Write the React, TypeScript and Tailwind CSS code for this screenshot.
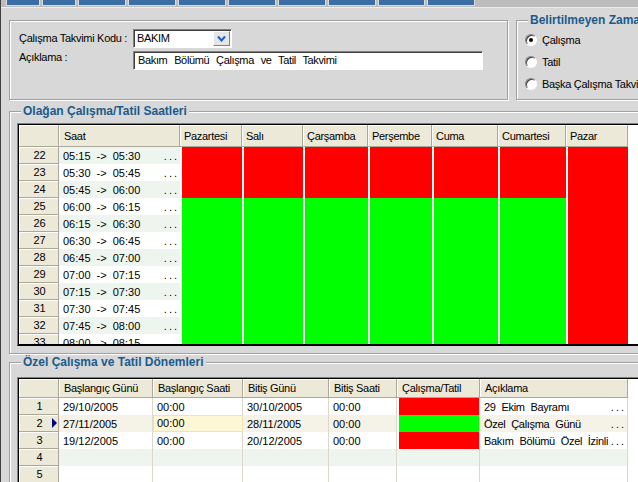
import React from 'react';

const days = [
  { name: 'Pazartesi', w: 'w-[62px]' },
  { name: 'Salı', w: 'w-[61px]' },
  { name: 'Çarşamba', w: 'w-[65px]' },
  { name: 'Perşembe', w: 'w-[64px]' },
  { name: 'Cuma', w: 'w-[66px]' },
  { name: 'Cumartesi', w: 'w-[68px]' },
  { name: 'Pazar', w: 'w-[62px]' },
];

const hourRows = Array.from({ length: 12 }, (_, i) => 22 + i);

const periods = [
  { n: 1, start: '29/10/2005', st: '00:00', end: '30/10/2005', et: '00:00', work: false, desc: '29 Ekim Bayramı' },
  { n: 2, start: '27/11/2005', st: '00:00', end: '28/11/2005', et: '00:00', work: true, desc: 'Özel Çalışma Günü', current: true },
  { n: 3, start: '19/12/2005', st: '00:00', end: '20/12/2005', et: '00:00', work: false, desc: 'Bakım Bölümü Özel İzinli' },
  { n: 4 },
  { n: 5 },
] as Array<{ n: number; start?: string; st?: string; end?: string; et?: string; work?: boolean; desc?: string; current?: boolean }>;

const toolbarButtons = ['w-[34px]', 'w-[34px]', 'w-[48px]', 'w-[48px]', 'w-[48px]', 'w-[48px]', 'w-[48px]', 'w-[48px]', 'w-[47px]', 'w-[48px]'];

function fmt(m: number) {
  const h = Math.floor(m / 60);
  const mm = m % 60;
  return `${String(h).padStart(2, '0')}:${String(mm).padStart(2, '0')}`;
}

function GroupBox({ title, className, children }: { title?: string; className: string; children?: React.ReactNode }) {
  return (
    <div className={`relative shrink-0 border border-[#a0a0a0] shadow-[inset_1px_1px_0_#fff,1px_1px_0_#fff] ${className}`}>
      {title && (
        <span className="absolute left-[11px] -top-[8px] px-[2px] bg-[#d8d8d8] text-[12px] leading-[14px] font-bold text-[#1a5b8c] whitespace-nowrap">
          {title}
        </span>
      )}
      {children}
    </div>
  );
}

function Radio({ checked, label }: { checked?: boolean; label: string }) {
  return (
    <div className="flex items-center h-[12px] gap-[5px]">
      <span className="w-[12px] h-[12px] shrink-0 rounded-full bg-white border border-[#808080] border-r-white border-b-white shadow-[inset_1px_1px_0_#404040] flex items-center justify-center">
        {checked && <span className="w-[4px] h-[4px] rounded-full bg-black" />}
      </span>
      <span className="tracking-[-0.3px] whitespace-nowrap">{label}</span>
    </div>
  );
}

export default function App() {
  return (
    <div className="w-[638px] h-[482px] overflow-hidden bg-[#d8d8d8] border-l border-[#404040] font-['Liberation_Sans',Arial,sans-serif] text-[11px] text-black">
      {/* toolbar strip */}
      <div className="h-[8px] bg-[#bdbdbd] border-b border-[#ececec] flex items-start gap-[2px] pl-[5px]">
        {toolbarButtons.map((w, i) => (
          <div key={i} className={`${w} h-[6px] bg-[#3a6ea5] border border-t-0 border-[#dcdcdc]`} />
        ))}
      </div>

      {/* top row */}
      <div className="flex items-start">
        <GroupBox className="ml-[8px] mt-[12px] w-[499px] h-[80px] pl-[9px] pt-[8px] flex flex-col gap-[3px]">
          <div className="flex items-center h-[19px]">
            <span className="w-[114px] tracking-[-0.3px]">Çalışma Takvimi Kodu :</span>
            <div className="w-[99px] h-[19px] bg-white border border-[#808080] border-r-white border-b-white shadow-[inset_1px_1px_0_#404040] flex items-center justify-between pl-[3px] pr-[1px]">
              <span className="tracking-[-0.3px]">BAKIM</span>
              <span className="w-[17px] h-[15px] bg-[#e6e6e6] border border-white border-r-[#808080] border-b-[#808080] flex items-center justify-center">
                <svg width="9" height="7" viewBox="0 0 9 7">
                  <polyline points="1,1.5 4.5,5.5 8,1.5" fill="none" stroke="#1c5fc8" strokeWidth="2" />
                </svg>
              </span>
            </div>
          </div>
          <div className="flex h-[19px]">
            <span className="w-[114px] leading-[13px] tracking-[-0.3px]">Açıklama :</span>
            <div className="w-[350px] h-[19px] bg-white border border-[#808080] border-r-white border-b-white shadow-[inset_1px_1px_0_#404040] flex items-center pl-[4px]">
              <span className="tracking-[-0.35px] [word-spacing:4px] whitespace-nowrap">Bakım Bölümü Çalışma ve Tatil Takvimi</span>
            </div>
          </div>
        </GroupBox>

        <GroupBox title="Belirtilmeyen Zamanlar" className="ml-[8px] mt-[12px] w-[140px] h-[80px] pl-[8px] pt-[13px] flex flex-col gap-[10px]">
          <Radio checked label="Çalışma" />
          <Radio label="Tatil" />
          <Radio label="Başka Çalışma Takvimi" />
        </GroupBox>
      </div>

      {/* regular hours */}
      <GroupBox title="Olağan Çalışma/Tatil Saatleri" className="ml-[8px] mt-[11px] w-[640px] h-[243px]">
        <div className="ml-[7px] mt-[11px] w-[640px] border-l border-t border-b border-[#808080] border-b-black">
          <div className="h-[221px] border-l border-t border-b border-black overflow-hidden">
            <div className="flex h-[22px]">
              <div className="w-[40px] shrink-0 bg-[#ece9d8] border-r border-b border-[#aca899] shadow-[inset_1px_1px_0_#fff]" />
              <div className="w-[121px] shrink-0 bg-[#ece9d8] border-r border-b border-[#aca899] shadow-[inset_1px_1px_0_#fff] pl-[5px] pt-[2px] flex items-center tracking-[-0.3px]">Saat</div>
              {days.map((d) => (
                <div key={d.name} className={`${d.w} shrink-0 bg-[#ece9d8] border-r border-b border-[#aca899] shadow-[inset_1px_1px_0_#fff] pl-[4px] pt-[2px] flex items-center tracking-[-0.3px] whitespace-nowrap`}>
                  {d.name}
                </div>
              ))}
              <div className="flex-1 bg-white" />
            </div>
            {hourRows.map((n) => {
              const start = (n - 1) * 15;
              const even = n % 2 === 0;
              return (
                <div key={n} className="flex h-[17px]">
                  <div className="w-[40px] shrink-0 bg-[#ece9d8] border-r border-b border-[#aca899] shadow-[inset_1px_1px_0_#fff] flex items-center justify-center pl-[2px] pt-[1px]">{n}</div>
                  <div className={`w-[121px] shrink-0 flex items-center justify-between pl-[4px] pr-[1px] pt-[1px] ${even ? 'bg-[#eef5ee]' : 'bg-white'}`}>
                    <span className="[word-spacing:3px] whitespace-nowrap">{fmt(start)} -&gt; {fmt(start + 15)}</span>
                    <span className="tracking-[2px]">...</span>
                  </div>
                  {days.map((d, i) => {
                    const red = i === 6 || n <= 24;
                    return <div key={d.name} className={`${d.w} shrink-0 border-l-2 border-white ${red ? 'bg-[#ff0000]' : 'bg-[#00ff00]'}`} />;
                  })}
                  <div className="flex-1 bg-white" />
                </div>
              );
            })}
          </div>
        </div>
      </GroupBox>

      {/* special periods */}
      <GroupBox title="Özel Çalışma ve Tatil Dönemleri" className="ml-[8px] mt-[8px] w-[640px] h-[140px]">
        <div className="ml-[7px] mt-[14px] w-[640px] border-l border-t border-[#808080]">
          <div className="h-[110px] border-l border-t border-black overflow-hidden">
            <div className="flex h-[19px]">
              <div className="w-[40px] shrink-0 bg-[#ece9d8] border-r border-b border-[#aca899] shadow-[inset_1px_1px_0_#fff]" />
              <div className="w-[94px] shrink-0 bg-[#ece9d8] border-r border-b border-[#aca899] shadow-[inset_1px_1px_0_#fff] pl-[5px] pt-[1px] flex items-center tracking-[-0.3px] whitespace-nowrap">Başlangıç Günü</div>
              <div className="w-[90px] shrink-0 bg-[#ece9d8] border-r border-b border-[#aca899] shadow-[inset_1px_1px_0_#fff] pl-[5px] pt-[1px] flex items-center tracking-[-0.3px] whitespace-nowrap">Başlangıç Saati</div>
              <div className="w-[86px] shrink-0 bg-[#ece9d8] border-r border-b border-[#aca899] shadow-[inset_1px_1px_0_#fff] pl-[5px] pt-[1px] flex items-center tracking-[-0.3px] whitespace-nowrap">Bitiş Günü</div>
              <div className="w-[68px] shrink-0 bg-[#ece9d8] border-r border-b border-[#aca899] shadow-[inset_1px_1px_0_#fff] pl-[5px] pt-[1px] flex items-center tracking-[-0.3px] whitespace-nowrap">Bitiş Saati</div>
              <div className="w-[83px] shrink-0 bg-[#ece9d8] border-r border-b border-[#aca899] shadow-[inset_1px_1px_0_#fff] pl-[5px] pt-[1px] flex items-center tracking-[-0.3px] whitespace-nowrap">Çalışma/Tatil</div>
              <div className="w-[148px] shrink-0 bg-[#ece9d8] border-r border-b border-[#aca899] shadow-[inset_1px_1px_0_#fff] pl-[5px] pt-[1px] flex items-center tracking-[-0.3px] whitespace-nowrap">Açıklama</div>
              <div className="flex-1 bg-white" />
            </div>
            {periods.map((p) => {
              const rowBg = p.current ? 'bg-[#f5f2e7]' : p.n % 2 === 0 ? 'bg-[#eef5ee]' : 'bg-white';
              return (
                <div key={p.n} className="flex h-[17px]">
                  <div className="w-[40px] shrink-0 bg-[#ece9d8] border-r border-b border-[#aca899] shadow-[inset_1px_1px_0_#fff] flex items-center justify-center pt-[1px] relative">
                    <span className="pl-[2px]">{p.n}</span>
                    {p.current && (
                      <svg className="absolute left-[33px] top-[3px]" width="6" height="10" viewBox="0 0 6 10">
                        <polygon points="0,0 5,5 0,10" fill="#000080" />
                      </svg>
                    )}
                  </div>
                  <div className={`w-[94px] shrink-0 border-r border-[#dcd9cc] pl-[4px] pt-[1px] flex items-center ${rowBg}`}>{p.start}</div>
                  <div className={`w-[90px] shrink-0 border-r border-[#dcd9cc] flex items-center ${p.current ? 'bg-[#fdf7d6] border border-[#efe4b4] pl-[3px] pb-[1px]' : `${rowBg} pl-[4px] pt-[1px]`}`}>{p.st}</div>
                  <div className={`w-[86px] shrink-0 border-r border-[#dcd9cc] pl-[4px] pt-[1px] flex items-center ${rowBg}`}>{p.end}</div>
                  <div className={`w-[68px] shrink-0 border-r border-[#dcd9cc] pl-[4px] pt-[1px] flex items-center ${rowBg}`}>{p.et}</div>
                  <div className={`w-[83px] shrink-0 border-r border-[#dcd9cc] flex ${rowBg}`}>
                    {p.start && <div className={`flex-1 border-l-2 border-white ${p.work ? 'bg-[#00ff00]' : 'bg-[#ff0000]'}`} />}
                  </div>
                  <div className={`w-[148px] shrink-0 border-r border-[#dcd9cc] pl-[4px] pr-[1px] pt-[1px] flex items-center justify-between ${rowBg}`}>
                    {p.desc && (
                      <>
                        <span className="tracking-[-0.3px] [word-spacing:3px] whitespace-nowrap">{p.desc}</span>
                        <span className="tracking-[2px]">...</span>
                      </>
                    )}
                  </div>
                  <div className="flex-1 bg-white" />
                </div>
              );
            })}
          </div>
        </div>
      </GroupBox>
    </div>
  );
}
